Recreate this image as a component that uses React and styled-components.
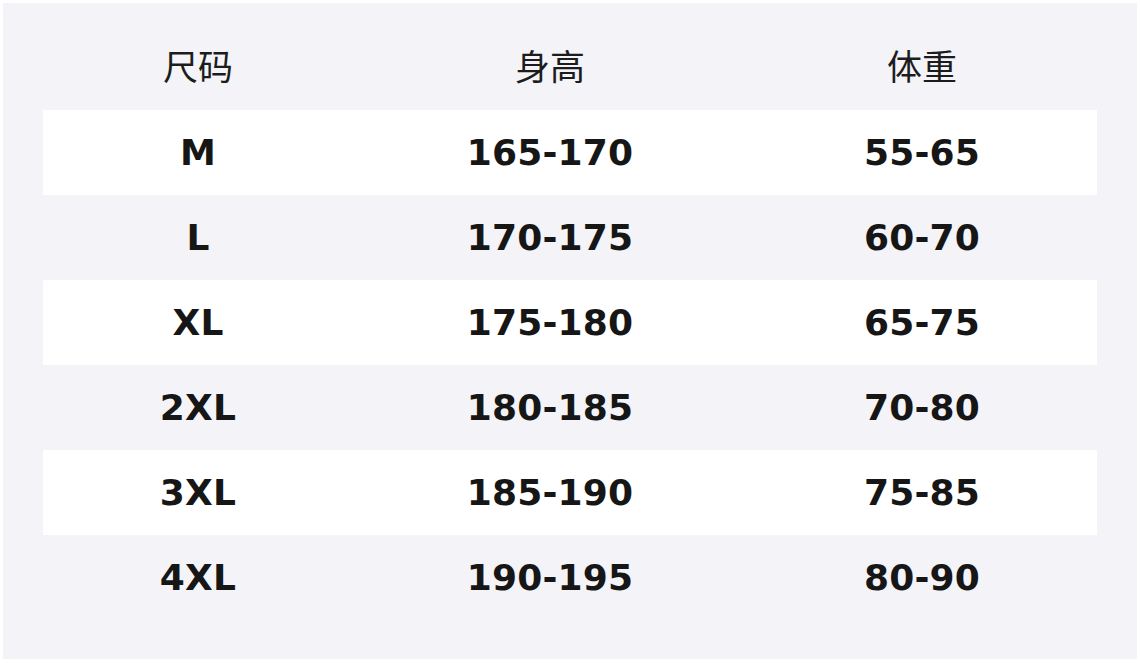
import React from "react";
import styled, { createGlobalStyle } from "styled-components";

const Global = createGlobalStyle`
  html, body { margin: 0; padding: 0; background: #ffffff; }
  body { font-family: "DejaVu Sans", "Noto Sans CJK SC", sans-serif; }
`;

const Frame = styled.div`
  width: 1140px;
  height: 663px;
  padding: 3px 3px 4px 3px;
  box-sizing: border-box;
  background: #ffffff;
`;

const Panel = styled.div`
  height: 100%;
  box-sizing: border-box;
  background: #f3f3f8;
  padding: 22px 40px 0 40px;
`;

const Table = styled.div`
  display: grid;
  grid-template-columns: 310px 394px 350px;
`;

const Row = styled.div`
  display: contents;
`;

const Cell = styled.div`
  height: 85px;
  box-sizing: border-box;
  display: flex;
  align-items: center;
  justify-content: center;
  background: ${(p) => (p.$white ? "#ffffff" : "transparent")};
  color: #161616;
  ${(p) =>
    p.$head
      ? `font-family: "Noto Sans CJK SC", "DejaVu Sans", sans-serif; font-size: 35px; font-weight: 400; color: #1c1c1c; padding-bottom: 6px;`
      : `font-family: "DejaVu Sans", sans-serif; font-size: 36px; font-weight: 700; letter-spacing: 0.2px;`}
`;

const data = [
  ["M", "165-170", "55-65"],
  ["L", "170-175", "60-70"],
  ["XL", "175-180", "65-75"],
  ["2XL", "180-185", "70-80"],
  ["3XL", "185-190", "75-85"],
  ["4XL", "190-195", "80-90"],
];

export default function App() {
  return (
    <>
      <Global />
      <Frame>
        <Panel>
          <Table>
            <Row>
              <Cell $head>尺码</Cell>
              <Cell $head>身高</Cell>
              <Cell $head>体重</Cell>
            </Row>
            {data.map((r, i) => (
              <Row key={r[0]}>
                {r.map((v, j) => (
                  <Cell key={j} $white={i % 2 === 0}>
                    {v}
                  </Cell>
                ))}
              </Row>
            ))}
          </Table>
        </Panel>
      </Frame>
    </>
  );
}
